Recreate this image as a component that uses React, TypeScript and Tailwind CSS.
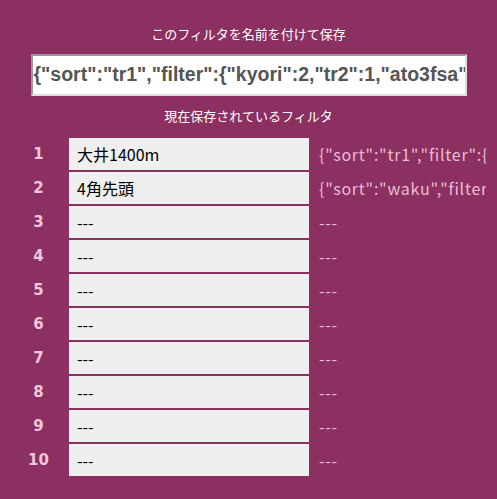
import React from "react";

const rows = [
  { name: "大井1400m", json: '{"sort":"tr1","filter":{"kyori":2,"tr2":1}}' },
  { name: "4角先頭", json: '{"sort":"waku","filter":{"kyori":1}}' },
  { name: "---", json: "---" },
  { name: "---", json: "---" },
  { name: "---", json: "---" },
  { name: "---", json: "---" },
  { name: "---", json: "---" },
  { name: "---", json: "---" },
  { name: "---", json: "---" },
  { name: "---", json: "---" },
];

export default function App() {
  return (
    <div className="w-[497px] h-[499px] bg-[#8b3060] overflow-hidden flex flex-col items-center pt-[24px] font-['Noto_Sans_CJK_JP',sans-serif]">
      <div className="text-[13px] leading-[19px] text-white">
        このフィルタを名前を付けて保存
      </div>
      <div className="mt-[11px] w-[436px] h-[42px] bg-white border-2 border-t-[#999] border-l-[#999] border-b-[#ddd] border-r-[#ddd] flex items-center pl-[1px] overflow-hidden">
        <span className="text-[19.5px] font-bold text-[#555] whitespace-nowrap font-['Liberation_Sans',Arial,sans-serif]">
          {'{"sort":"tr1","filter":{"kyori":2,"tr2":1,"ato3fsa":0}}'}
        </span>
      </div>
      <div className="mt-[10px] text-[13px] leading-[19px] text-white">
        現在保存されているフィルタ
      </div>
      <div className="mt-[13px] w-full flex flex-col gap-[2px] pl-[8px]">
        {rows.map((r, i) => (
          <div key={i} className="flex items-center h-[32px]">
            <div className="w-[61px] text-center font-bold text-[15px] text-[#f2c6dc] font-['DejaVu_Sans',Verdana,sans-serif]">
              {i + 1}
            </div>
            <div className="w-[240px] h-[32px] bg-[#efefef] flex items-center pl-[8px] text-[16px] text-black">
              {r.name}
            </div>
            <div className="ml-[10px] w-[167px] overflow-hidden whitespace-nowrap text-[16px] tracking-[0.75px] text-[#ecbcd4]">
              {r.json}
            </div>
          </div>
        ))}
      </div>
    </div>
  );
}
